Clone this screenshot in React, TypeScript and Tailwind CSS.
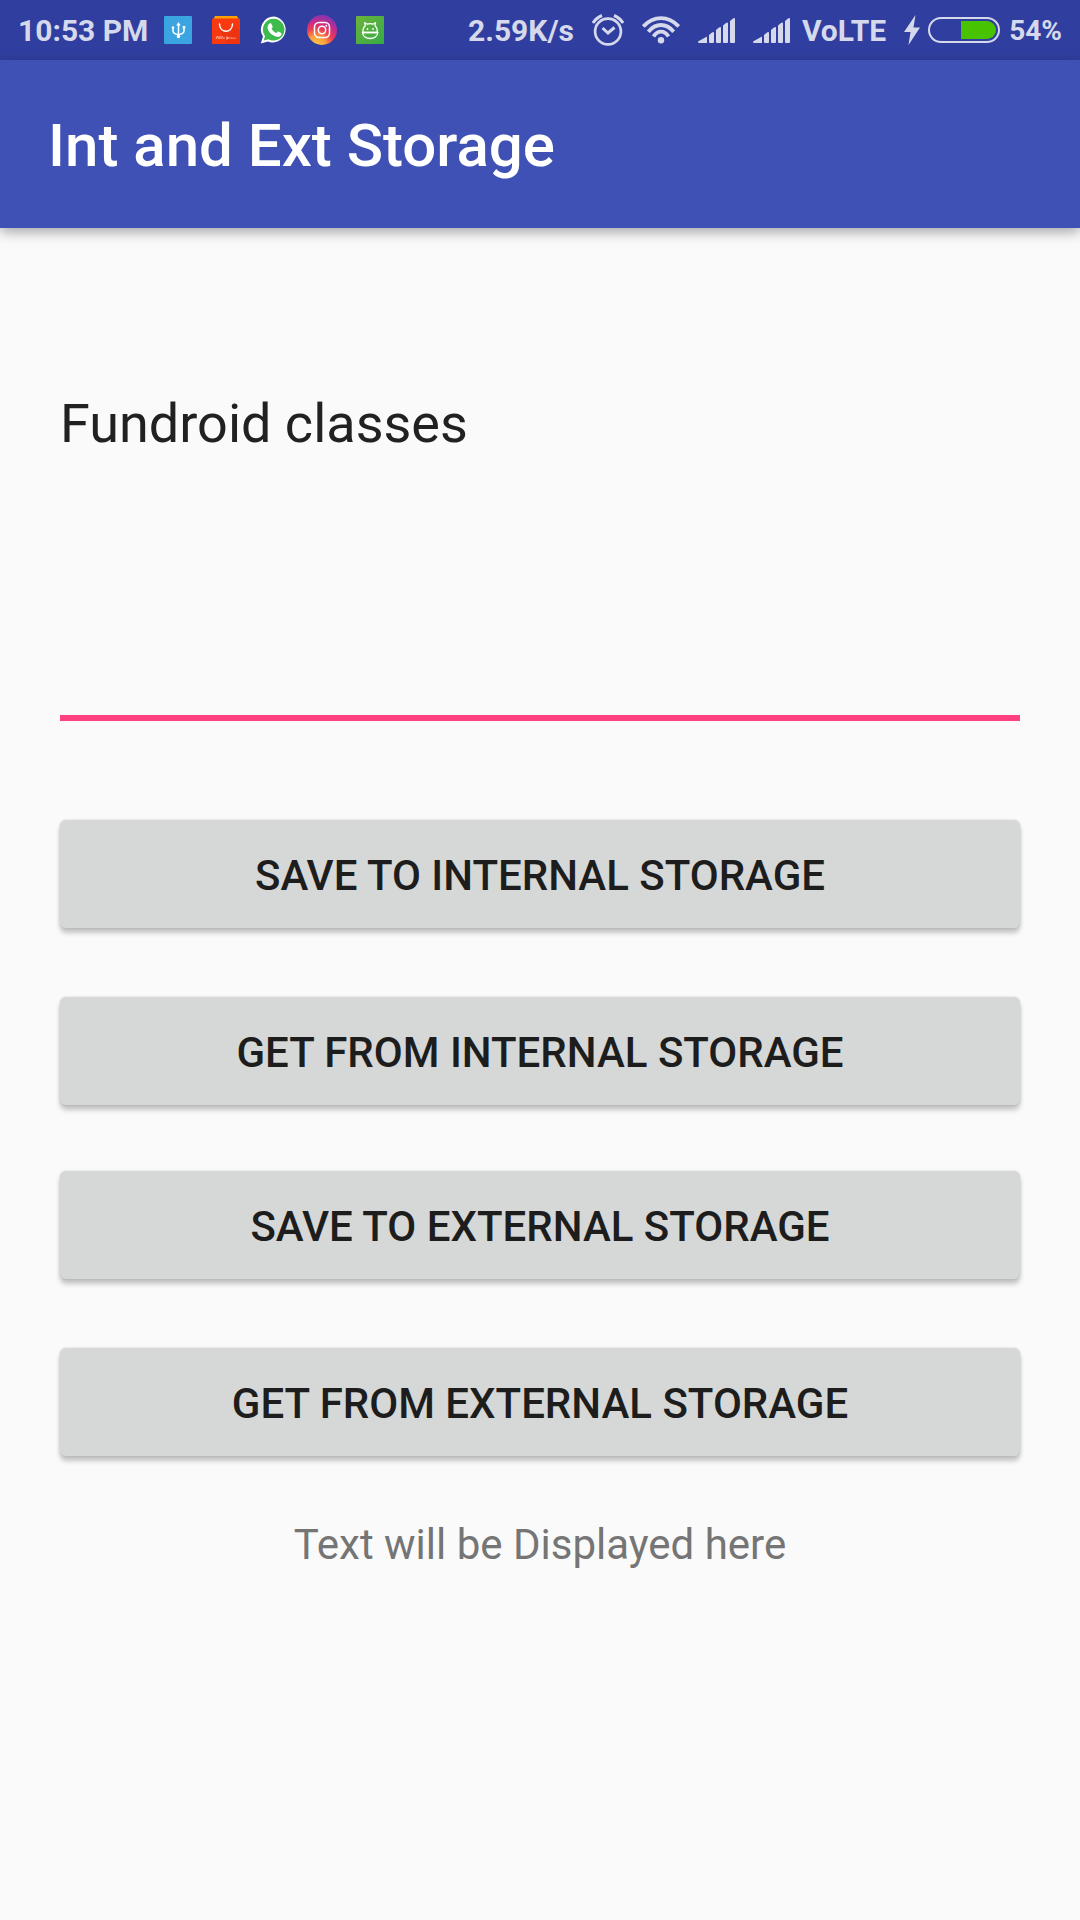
import React from "react";

function UsbIcon() {
  return (
    <svg viewBox="0 0 28 28" className="size-7" aria-hidden="true">
      <rect width="28" height="28" rx="1" fill="#3aa5e0" />
      <g fill="none" stroke="#fff" strokeWidth="1.500">
        <path d="M14.500 8v13" />
        <path d="M9 11v4q0 2.500 5.500 3.800q5.500-1.300 5.500-3.800v-4" />
      </g>
      <path d="M12.300 9.500l2.200-3.500l2.200 3.500z" fill="#fff" />
      <circle cx="9" cy="11.500" r="1.300" fill="#fff" />
      <rect x="18.700" y="10" width="2.600" height="2.600" fill="#fff" />
      <circle cx="14.500" cy="20.500" r="1.700" fill="#fff" />
    </svg>
  );
}

function ShoppingIcon() {
  return (
    <svg viewBox="0 0 28 28" className="size-7" aria-hidden="true">
      <path d="M3 0h22l2 4H1z" fill="#ffa000" />
      <path d="M1 2.500h26q1 0 1 1V27q0 1-1 1H1q-1 0-1-1V3.500q0-1 1-1z" fill="#f9390f" />
      <path d="M21 8l7 7v12q0 1-1 1H15L8 15h10z" fill="#e23312" opacity=".55" />
      <path d="M7.500 8c.3 9.500 12.700 9.500 13 0" fill="none" stroke="#fff" strokeWidth="1.500" strokeLinecap="round" />
      <path d="M4 23l1.500-3l1.500 3M8 20v3M10 20v3M12 21v2M14 21h1.500v2H14M17 21v2M18.500 22h1.500M21 21.500v1.500M23 21.500v1.500" fill="none" stroke="#ffd3c8" strokeWidth=".8" />
    </svg>
  );
}

function WhatsAppIcon() {
  return (
    <svg viewBox="0 0 28 28" className="size-7" aria-hidden="true">
      <path d="M14 .5A13 13 0 0 0 3 20.500L.8 27.500l7-2A13 13 0 1 0 14 .5z" fill="#fff" />
      <path d="M14 2.700A10.900 10.900 0 0 0 5 20l-1.200 4.500l4.600-1.300A10.900 10.900 0 1 0 14 2.700z" fill="#3dbb4c" />
      <path
        d="M9.700 7.400c.6-.3 1.400-.3 1.700.3l1.200 2.700c.2.600-.1 1-1.200 2.200c1.200 2.200 2.800 3.500 5 4.500c1.100-1.400 1.400-1.800 2-1.500l2.700 1.300c.6.300.6.900.2 2c-.7 1.700-3 2.300-4.800 1.800C11.700 19.500 8.500 16 7.600 12.600C7.200 10.500 8.300 8 9.700 7.400z"
        fill="#fff"
      />
    </svg>
  );
}

function InstagramIcon() {
  return (
    <svg viewBox="0 0 30 30" className="-mx-px size-[30px]" aria-hidden="true">
      <defs>
        <radialGradient id="insta" cx="30%" cy="105%" r="110%">
          <stop offset="0" stopColor="#ffd24d" />
          <stop offset=".3" stopColor="#fba03c" />
          <stop offset=".55" stopColor="#ea3a55" />
          <stop offset=".75" stopColor="#c62b8b" />
          <stop offset="1" stopColor="#7f35b4" />
        </radialGradient>
      </defs>
      <circle cx="15" cy="15" r="15" fill="url(#insta)" />
      <g fill="none" stroke="#fff" strokeWidth="1.500">
        <rect x="7.500" y="7.500" width="15" height="15" rx="4.500" />
        <circle cx="15" cy="15" r="3.700" />
      </g>
      <circle cx="19.300" cy="10.800" r="1" fill="#fff" />
    </svg>
  );
}

function DroidIcon() {
  return (
    <svg viewBox="0 0 28 28" className="size-7" aria-hidden="true">
      <defs>
        <linearGradient id="droid" x1="0" y1="0" x2="1" y2="1">
          <stop offset="0" stopColor="#6cb33a" />
          <stop offset="1" stopColor="#35ab45" />
        </linearGradient>
      </defs>
      <rect width="28" height="28" rx="1" fill="url(#droid)" />
      <g fill="none" stroke="#fff" strokeWidth="1.300" strokeLinejoin="round">
        <path d="M7 16.500c-.3-3 .8-5.500 2.300-6.700L8.700 6.700l2.700 1.500q2.700-1 5.400 0l2.700-1.500l-.6 3.100c1.500 1.200 2.600 3.700 2.300 6.700z" />
        <path d="M6.500 16.500c.2 8 15.100 8 15.300 0z" />
      </g>
      <circle cx="11.500" cy="13" r=".9" fill="#fff" />
      <circle cx="17" cy="13" r=".9" fill="#fff" />
    </svg>
  );
}

function AlarmIcon() {
  return (
    <svg viewBox="0 0 32 32" className="size-8" fill="none" stroke="currentColor" aria-hidden="true">
      <circle cx="16" cy="17.500" r="12.900" strokeWidth="2.700" />
      <path d="M10.500 14l5.500 5l6.500-5.500" strokeWidth="3" />
      <path d="M1 9Q4 4 10 1.500M31 9Q28 4 22 1.500" strokeWidth="3" />
    </svg>
  );
}

function WifiIcon() {
  return (
    <svg viewBox="0 0 38 28" className="h-7 w-[38px]" fill="none" stroke="currentColor" strokeWidth="3.800" aria-hidden="true">
      <path d="M1.300 10.500Q9 2.200 19 2.200T36.700 10.500" />
      <path d="M6.300 15.700Q12 9 19 9T31.700 15.700" />
      <path d="M11.500 20.500Q14.500 15.700 19 15.700T26.500 20.500" />
      <circle cx="19" cy="24.300" r="3.200" fill="currentColor" stroke="none" />
    </svg>
  );
}

function SignalIcon() {
  return (
    <svg viewBox="0 0 37 25" className="h-[25px] w-[37px]" fill="currentColor" aria-hidden="true">
      <path d="M0 23.500L9 18.500V25H1Q0 25 0 23.500z" />
      <path d="M11 17l3-2.500q2-1 2 .5V24q0 1-1 1h-3q-1 0-1-1z" />
      <path d="M18 12l3-2.500q2-1 2 .5V24q0 1-1 1h-3q-1 0-1-1z" />
      <path d="M25 7.500l3-2.500q2-1 2 .5V24q0 1-1 1h-3q-1 0-1-1z" />
      <path d="M32 3l3-2.500q2-1 2 .5V24q0 1-1 1h-3q-1 0-1-1z" />
    </svg>
  );
}

function BatteryIcon() {
  return (
    <svg viewBox="0 0 72 26" className="h-[26px] w-[72px]" aria-hidden="true">
      <rect x="1" y="1" width="70" height="24" rx="12" fill="none" stroke="currentColor" strokeWidth="2" />
      <path d="M33 4h26a9 9 0 0 1 0 18H33z" fill="#47c300" />
    </svg>
  );
}

function StatusBar() {
  return (
    <div className="flex h-[60px] items-center justify-between bg-[#303f9f] px-[18px] text-[30px] leading-9 font-bold text-[#d6d9ec]">
      <div className="flex items-center">
        <span className="mr-4 pt-0.5">10:53 PM</span>
        <div className="flex items-center gap-5">
          <UsbIcon />
          <ShoppingIcon />
          <WhatsAppIcon />
          <InstagramIcon />
          <DroidIcon />
        </div>
      </div>
      <div className="flex items-center">
        <span className="pt-0.5">2.59K/s</span>
        <div className="mr-3 ml-[18px] flex items-center gap-[18px]">
          <AlarmIcon />
          <WifiIcon />
          <SignalIcon />
          <SignalIcon />
        </div>
        <span className="pt-0.5">VoLTE</span>
        <svg viewBox="0 0 16 30" className="mr-2 ml-[18px] h-[30px] w-4" fill="currentColor" aria-hidden="true">
          <path d="M11.500 0L0 17h6.500L4.500 30L16 12.500H9.500z" />
        </svg>
        <BatteryIcon />
        <span className="ml-[9px] pt-0.5 text-[28px]">54%</span>
      </div>
    </div>
  );
}

function StorageButton({ children }: { children: React.ReactNode }) {
  return (
    <button
      type="button"
      className="h-[108px] w-full rounded-[6px] bg-[#d6d8d7] pt-1 text-[42px] leading-[50px] font-medium text-[#1d1d1d] uppercase shadow-[0_5px_5px_rgba(0,0,0,0.22),0_0_3px_rgba(0,0,0,0.14)]"
    >
      {children}
    </button>
  );
}

export default function App() {
  return (
    <div className="flex min-h-screen flex-col bg-[#fafafa] font-[Roboto,sans-serif]">
      <StatusBar />
      <header className="flex h-[168px] items-center bg-[#3f51b5] px-12 pt-1 shadow-[0_4px_12px_rgba(0,0,0,0.34)]">
        <h1 className="text-[60px] leading-[70px] font-medium text-white">Int and Ext Storage</h1>
      </header>
      <main className="flex flex-col px-[60px] pt-[164px]">
        <textarea
          aria-label="Text to store"
          defaultValue="Fundroid classes"
          spellCheck={false}
          className="h-[329px] w-full resize-none border-b-6 border-[#ff4081] text-[54px] leading-[64px] text-[#212121] outline-none"
        />
        <div className="mt-[99px] flex flex-col gap-[66px]">
          <div className="flex flex-col gap-[69px]">
            <StorageButton>Save to internal storage</StorageButton>
            <StorageButton>Get from internal storage</StorageButton>
          </div>
          <div className="flex flex-col gap-[69px]">
            <StorageButton>Save to external storage</StorageButton>
            <StorageButton>Get from external storage</StorageButton>
          </div>
        </div>
        <p className="mt-16 text-center text-[42px] leading-[50px] text-[#757575]">Text will be Displayed here</p>
      </main>
    </div>
  );
}
